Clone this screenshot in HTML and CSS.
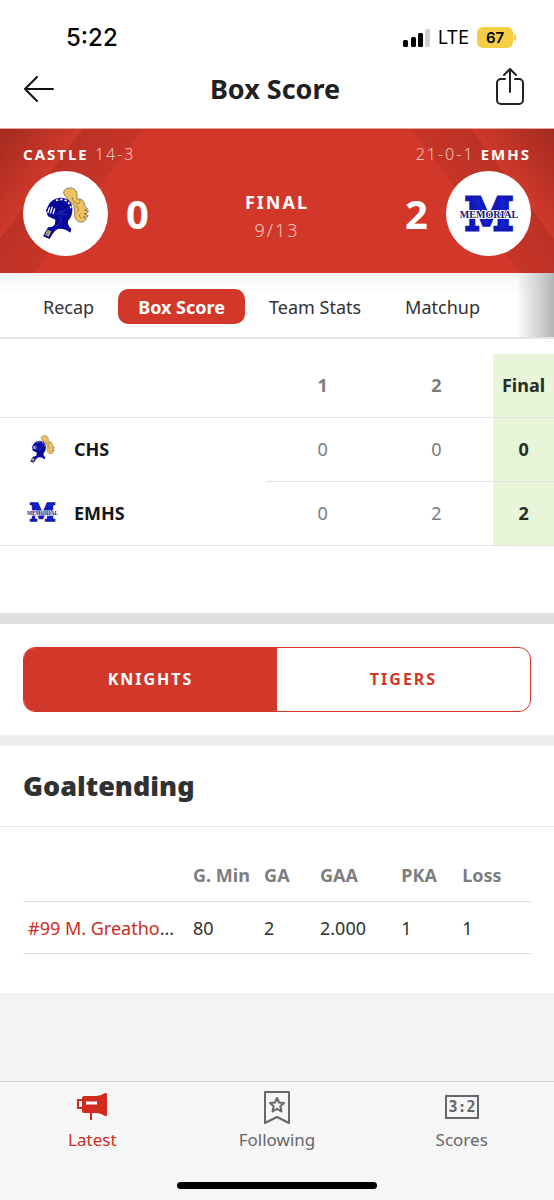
FILE: index.html
```
<!DOCTYPE html>
<html lang="en">
<head>
    <meta charset="UTF-8">
    <meta name="viewport" content="width=device-width, initial-scale=1">
    <title>Box Score</title>
    <link rel="stylesheet" href="styles.css">
</head>
<body>
<!-- team logos, used in the scoreboard and in the line score -->
<svg class="sprite" aria-hidden="true">
    <symbol id="knight" viewBox="0 0 156 174">
        <path d="M84 46C80 38 82 36 76 33C68 26 70 14 80 11C92 6 106 10 110 22C113 30 109 38 111 42C122 40 132 46 133 56C134 64 137 68 143 71L134 76L145 77C144 85 138 88 132 86L145 92C142 99 136 97 130 95L138 102C134 112 120 114 113 108C106 104 104 96 104 88C105 78 101 70 103 62C96 56 90 52 84 46Z" fill="#f0c35c" stroke="#5d4450" stroke-width="2"/>
        <path d="M96 36C98 46 104 54 112 56C120 56 122 50 118 44M108 62C116 68 116 76 112 82M121 86C116 90 118 97 124 100" fill="none" stroke="#5d4450" stroke-width="2"/>
        <path d="M18 76L27 57C36 44 50 38 66 38C84 40 96 52 97 70C98 86 94 98 84 108C82 116 86 124 94 132L91 143C78 132 64 129 54 132C44 136 38 146 29 162L9 154L24 127C36 126 44 122 45 116L46 104L24 94L21 86Z" fill="#07079c"/>
        <path d="M48 46L66 43C80 45 90 54 93 70" fill="none" stroke="#fff" stroke-width="5" stroke-dasharray="7 6"/>
        <path d="M23 84L29 67M31 85L37 65M39 87L44 70" stroke="#fff" stroke-width="4"/>
        <path d="M46 89L58 84M66 80L84 70M60 90C62 102 68 108 58 116C54 120 50 122 46 124M68 90L82 88" fill="none" stroke="#6b6bd6" stroke-width="1"/>
        <circle cx="63" cy="83" r="5" fill="none" stroke="#8585e0" stroke-width="1"/>
        <path d="M22 134L34 139L26 155L15 150Z" fill="#d5c68c" stroke="#222" stroke-width="1"/>
        <path d="M22 139L28 142M20 144L26 147M17 149L23 151" stroke="#222" stroke-width="2"/>
    </symbol>
    <symbol id="memorial" viewBox="0 0 58 42">
        <text class="logo-initial" x="29" y="37" text-anchor="middle">M</text>
        <text class="logo-word" x="29" y="25" text-anchor="middle">MEMORIAL</text>
    </symbol>
</svg>

<div class="status">
    <span class="time">5:22</span>
    <div class="phone">
        <svg width="27" height="18" viewBox="0 0 27 18" aria-hidden="true">
            <rect x="0" y="11" width="5" height="7" rx="1.5"/>
            <rect x="8" y="8" width="5" height="10" rx="1.5"/>
            <rect x="15" y="4" width="5" height="14" rx="1.5"/>
            <rect x="22" y="0" width="5" height="18" rx="1.5" fill="#d0d0d0"/>
        </svg>
        <span class="network">LTE</span>
        <span class="battery">67</span>
    </div>
</div>

<header class="header">
    <button class="icon-btn" type="button" aria-label="Back">
        <svg width="30" height="26" viewBox="0 0 30 26">
            <path d="M29 13H1M13 1L1 13l12 12" fill="none" stroke="#111" stroke-width="2" stroke-linecap="round" stroke-linejoin="round"/>
        </svg>
    </button>
    <h1>Box Score</h1>
    <button class="icon-btn share" type="button" aria-label="Share">
        <svg width="28" height="37" viewBox="0 0 28 37">
            <path d="M9 11H5a4 4 0 0 0-4 4v17a4 4 0 0 0 4 4h18a4 4 0 0 0 4-4V15a4 4 0 0 0-4-4h-4M14 24V1M8 7l6-6 6 6" fill="none" stroke="#222" stroke-width="2" stroke-linecap="round" stroke-linejoin="round"/>
        </svg>
    </button>
</header>

<section class="hero">
    <div class="records">
        <span><b>CASTLE</b> 14-3</span>
        <span>21-0-1 <b>EMHS</b></span>
    </div>
    <div class="scoreboard">
        <div class="badge"><svg class="knight" aria-label="Castle Knights"><use href="#knight"/></svg></div>
        <strong class="score">0</strong>
        <div class="game">
            <b>FINAL</b>
            <span>9/13</span>
        </div>
        <strong class="score">2</strong>
        <div class="badge"><svg class="memorial" aria-label="Memorial Tigers"><use href="#memorial"/></svg></div>
    </div>
</section>

<nav class="tabs">
    <a href="#">Recap</a>
    <a class="active" href="#">Box Score</a>
    <a href="#">Team Stats</a>
    <a href="#">Matchup</a>
</nav>

<main>
    <section class="linescore">
        <table>
            <thead>
            <tr>
                <th class="team"></th>
                <th>1</th>
                <th>2</th>
                <th class="final">Final</th>
            </tr>
            </thead>
            <tbody>
            <tr>
                <th class="team">
                    <div><svg aria-hidden="true"><use href="#knight"/></svg>CHS</div>
                </th>
                <td>0</td>
                <td>0</td>
                <td class="final">0</td>
            </tr>
            <tr>
                <th class="team">
                    <div><svg aria-hidden="true"><use href="#memorial"/></svg>EMHS</div>
                </th>
                <td>0</td>
                <td>2</td>
                <td class="final">2</td>
            </tr>
            </tbody>
        </table>
    </section>

    <section class="switch-wrap">
        <div class="switch">
            <button class="on" type="button">KNIGHTS</button>
            <button type="button">TIGERS</button>
        </div>
    </section>

    <section class="stats">
        <h2>Goaltending</h2>
        <div class="stats-table">
            <table>
                <thead>
                <tr>
                    <th class="player"></th>
                    <th class="min">G. Min</th>
                    <th class="ga">GA</th>
                    <th class="gaa">GAA</th>
                    <th class="pka">PKA</th>
                    <th>Loss</th>
                </tr>
                </thead>
                <tbody>
                <tr>
                    <td class="player"><a href="#">#99 M. Greatho</a>...</td>
                    <td>80</td>
                    <td>2</td>
                    <td>2.000</td>
                    <td>1</td>
                    <td>1</td>
                </tr>
                </tbody>
            </table>
        </div>
    </section>
</main>

<footer class="tabbar">
    <nav>
        <a class="current" href="#">
            <svg width="36" height="36" viewBox="0 0 36 36" aria-hidden="true">
                <path d="M8 8c0-1 1-2 2-2h11c4 0 7-1 10-3 1 0 2 0 2 1v21c0 1-1 1-2 1-3-2-6-3-10-3H10c-1 0-2-1-2-2z" fill="#d02b1e"/>
                <path d="M8 10H4v8h4M17 22v8" fill="none" stroke="#d02b1e" stroke-width="2"/>
                <path d="M12 13h11" stroke="#fff" stroke-width="3"/>
            </svg>
            Latest
        </a>
        <a href="#">
            <svg width="36" height="36" viewBox="0 0 36 36" aria-hidden="true">
                <path d="M6 2h24v31l-12-6-12 6z" fill="none" stroke="#66676a" stroke-width="2" stroke-linejoin="round"/>
                <path d="M18 8l2 4.500 5 .5-3.700 3.300 1.200 5.200-4.500-2.700-4.500 2.700 1.200-5.200L11 13l5-.5z" fill="none" stroke="#66676a" stroke-width="2" stroke-linejoin="round"/>
            </svg>
            Following
        </a>
        <a href="#">
            <svg width="36" height="36" viewBox="0 0 36 36" aria-hidden="true">
                <rect x="2" y="6" width="32" height="22" fill="none" stroke="#66676a" stroke-width="2"/>
                <text class="mini-score" x="18" y="22" text-anchor="middle">3:2</text>
            </svg>
            Scores
        </a>
    </nav>
    <div class="home-bar"></div>
</footer>
</body>
</html>
```
FILE: styles.css
```
* {
    margin: 0;
    padding: 0;
    box-sizing: border-box;
}

body {
    display: flex;
    flex-direction: column;
    min-height: 100vh;
    background: #f3f3f4;
    color: #303132;
    font: 18px/24px "Noto Sans", sans-serif;
}

a {
    color: inherit;
    text-decoration: none;
}

button {
    border: 0;
    background: none;
    font: inherit;
    cursor: pointer;
}

svg {
    display: block;
}

table {
    width: 100%;
    border-collapse: collapse;
    table-layout: fixed;
}

.sprite {
    display: none;
}

/* status bar */
.status {
    display: flex;
    justify-content: space-between;
    align-items: center;
    padding: 25px 41px 0 66px;
    height: 50px;
    background: #fff;
    color: #000;
    font-family: Inter, sans-serif;
}

.time {
    font-size: 24px;
    font-weight: 500;
}

.phone {
    display: flex;
    align-items: center;
}

.network {
    margin: 0 8px;
    font-size: 18px;
}

.battery {
    position: relative;
    width: 36px;
    height: 21px;
    border-radius: 6px;
    background: #f5ce46;
    font-size: 15px;
    font-weight: 600;
    line-height: 21px;
    text-align: center;
}

.battery::after {
    content: "";
    position: absolute;
    top: 7px;
    right: -3px;
    width: 2px;
    height: 7px;
    border-radius: 0 2px 2px 0;
    background: #f5ce46;
}

/* header */
.header {
    display: flex;
    justify-content: space-between;
    align-items: center;
    padding: 0 30px 0 24px;
    height: 79px;
    border-bottom: 1px solid #e3a39d;
    background: #fff;
}

h1 {
    color: #1f2021;
    font-size: 27px;
    font-weight: 700;
    line-height: 36px;
}

.share {
    padding-bottom: 6px;
}

/* scoreboard */
.hero {
    padding: 13px 23px 17px;
    background: linear-gradient(127deg, #a32a1f 0, #cf392b 66px, #bd3226 66px, #c53427 114px, transparent 114px),
                linear-gradient(233deg, #a32a1f 0, #cf392b 66px, #bd3226 66px, #c53427 114px, transparent 114px),
                #d23829;
    color: #fff;
}

.records {
    display: flex;
    justify-content: space-between;
    margin-bottom: 5px;
    color: #f3c6c1;
    font-size: 16px;
    font-weight: 300;
    letter-spacing: 2px;
}

.records b {
    color: #fff;
    font-size: 15px;
    font-weight: 700;
}

.scoreboard {
    display: flex;
    align-items: center;
    gap: 18px;
}

.badge {
    display: flex;
    justify-content: center;
    align-items: center;
    width: 85px;
    height: 85px;
    border-radius: 50%;
    background: #fff;
}

.badge .knight {
    width: 52px;
    height: 58px;
}

.badge .memorial {
    width: 58px;
    height: 42px;
}

.score {
    font-size: 40px;
    line-height: 48px;
}

.game {
    display: flex;
    flex: 1;
    flex-direction: column;
    align-items: center;
    gap: 4px;
    padding-top: 4px;
    letter-spacing: 2px;
}

.game span {
    color: #f3c6c1;
    font-weight: 300;
}

.logo-initial {
    fill: #1220d0;
    stroke: #1019b8;
    stroke-width: 3px;
    font: 700 44px "DejaVu Serif", serif;
}

.logo-word {
    fill: #101570;
    stroke: #fff;
    stroke-width: 2px;
    paint-order: stroke;
    font: 700 10px "Liberation Serif", serif;
}

/* tabs */
.tabs {
    display: flex;
    align-items: center;
    gap: 4px;
    padding: 2px 23px 0;
    height: 66px;
    border-bottom: 2px solid #e4e4e4;
    background: linear-gradient(to left, #b5b5b5 0, #fff0 38px),
                linear-gradient(#f6f6f6, #fff 24px);
    white-space: nowrap;
}

.tabs a {
    padding: 6px 20px 5px;
    border-radius: 10px;
}

.tabs .active {
    background: #d23829;
    color: #fff;
    font-weight: 700;
}

/* line score */
.linescore {
    padding: 15px 0 67px;
    border-bottom: 11px solid #dfdfe2;
    background: #fff;
}

.linescore th,
.linescore td {
    height: 64px;
    border-bottom: 1px solid #e3e3e5;
    color: #7a7b7c;
    text-align: center;
}

.linescore thead th {
    height: 63px;
}

.linescore .team {
    width: 48%;
    color: #151617;
}

.linescore tbody tr:first-child .team {
    border-bottom: 0;
}

.linescore .final {
    width: 11%;
    background: #e8f5d9;
    color: #262e26;
    font-weight: 700;
}

.team div {
    display: flex;
    align-items: center;
    gap: 16px;
    padding-left: 27px;
}

.team svg {
    width: 31px;
    height: 31px;
}

/* team switch */
.switch-wrap {
    padding: 23px;
    border-bottom: 11px solid #ededed;
    background: #fff;
}

.switch {
    display: flex;
    overflow: hidden;
    border: 1px solid #d23829;
    border-radius: 12px;
}

.switch button {
    flex: 1;
    height: 63px;
    color: #d23829;
    font-size: 16px;
    font-weight: 700;
    letter-spacing: 2px;
}

.switch .on {
    background: #d23829;
    color: #fff;
}

/* goaltending */
.stats {
    padding-bottom: 39px;
    background: #fff;
}

h2 {
    padding: 22px 23px;
    border-bottom: 1px solid #e6e6e8;
    font-size: 27px;
    font-weight: 900;
    line-height: 36px;
}

.stats-table {
    padding: 23px 23px 0;
}

.stats th,
.stats td {
    height: 52px;
    border-bottom: 1px solid #dedee0;
    text-align: left;
    white-space: nowrap;
}

.stats th {
    color: #7d7e7f;
}

.stats .player {
    width: 170px;
    padding-left: 5px;
}

.stats .min {
    width: 14%;
}

.stats .ga {
    width: 11%;
}

.stats .gaa {
    width: 16%;
}

.stats .pka {
    width: 12%;
}

.player a {
    color: #d02b1e;
}

/* bottom bar */
.tabbar {
    margin-top: auto;
    padding: 8px 0 11px;
    border-top: 1px solid #cfd2d9;
    background: #f6f6f6;
    color: #66676a;
    font-size: 17px;
}

.tabbar nav {
    display: flex;
    justify-content: space-around;
}

.tabbar a {
    display: flex;
    flex: 1;
    flex-direction: column;
    align-items: center;
    gap: 2px;
}

.tabbar .current {
    color: #d02b1e;
}

.mini-score {
    fill: #66676a;
    font: 700 15px "DejaVu Sans Mono", monospace;
}

.home-bar {
    margin: 30px auto 0;
    width: 36%;
    height: 7px;
    border-radius: 4px;
    background: #000;
}
```
